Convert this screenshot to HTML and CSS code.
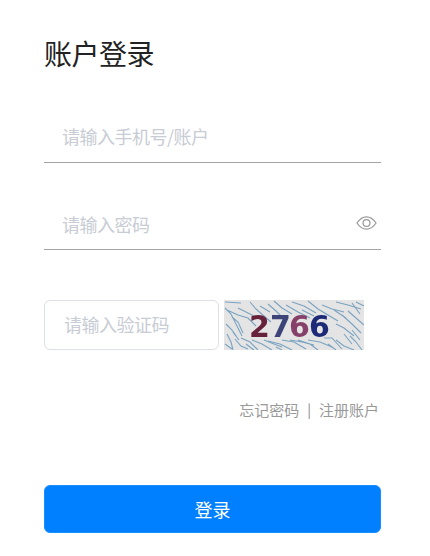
FILE: index.html
```html
<!DOCTYPE html>
<html lang="zh-CN">
<head>
<meta charset="utf-8">
<title>账户登录</title>
<link rel="stylesheet" href="styles.css">
</head>
<body>
<main class="login">
  <h1 class="title">账户登录</h1>
  <div class="field field-account">
    <input class="line-input" type="text" placeholder="请输入手机号/账户">
  </div>
  <div class="field field-password">
    <input class="line-input" type="password" placeholder="请输入密码">
    <svg class="eye" viewBox="0 0 22 16" width="21" height="16" aria-hidden="true">
      <path d="M1 8C4 3.600 7.300 1.500 11 1.500S18 3.600 21 8C18 12.400 14.700 14.500 11 14.500S4 12.400 1 8Z" fill="none" stroke="#999" stroke-width="1.300"/>
      <circle cx="11" cy="8" r="3.600" fill="none" stroke="#999" stroke-width="1.300"/>
    </svg>
  </div>
  <div class="captcha-row">
    <input class="captcha-input" type="text" placeholder="请输入验证码">
    <svg class="captcha" viewBox="0 0 140 50" width="140" height="50" aria-label="2766">
      <defs>
        <filter id="soft" x="-5%" y="-5%" width="110%" height="110%"><feGaussianBlur stdDeviation="0.35"/></filter>
      </defs>
      <rect width="140" height="50" fill="#e4e4e4"/>
      <g class="noise" filter="url(#soft)">
        <path d="M1 2L17 3M1 8L7 14L13 26L18 36M3 10L14 15L24 18L32 26M8 17L14 22L19 33M2 24L8 30L12 36M14 8L26 14L36 19"/>
        <path d="M26 2L32 9L40 16L47 22M44 4L52 11L60 19M50 1L58 8L68 14M62 5L74 12L86 18M36 6L46 12"/>
        <path d="M68 2L80 6L92 13M84 1L94 9L104 15L114 21M98 5L108 9L120 12M112 2L124 5L137 9M78 10L90 16"/>
        <path d="M118 15L128 24L137 33M112 24L120 28L130 36M124 11L132 18L140 25M128 30L136 40M128 3L136 14M132 2L140 6M110 10L122 18"/>
        <path d="M3 34L7 42L9 50M11 39L17 46L24 49M1 44L8 49M17 38L26 42L34 50M28 40L38 44L48 50M40 40L50 44L58 47M9 32L15 40"/>
        <path d="M44 41L56 44L68 50M58 40L70 42L82 49M66 40L78 42L90 45M84 40L96 42L108 47M100 38L108 38L118 49M74 40L86 44L94 50"/>
        <path d="M112 40L120 46L130 50M126 36L132 42L138 50M104 44L112 50M120 34L128 44M22 44L30 50M52 47L58 50"/>
      </g>
      <g class="digits" filter="url(#soft)">
        <text x="25" y="37" fill="#66223a">2</text>
        <text x="46" y="37" fill="#3d4478">7</text>
        <text x="65" y="37" fill="#86406a">6</text>
        <text x="85" y="37" fill="#1e2a78">6</text>
      </g>
    </svg>
  </div>
  <nav class="links">
    <a class="link">忘记密码</a>
    <span class="sep">|</span>
    <a class="link">注册账户</a>
  </nav>
  <button class="submit" type="button">登录</button>
</main>
</body>
</html>
```
FILE: styles.css
```css
* { box-sizing: border-box; }
html, body { margin: 0; height: 100%; background: #fff; }
body {
  font-family: "Noto Sans CJK SC", "Liberation Sans", sans-serif;
  overflow: hidden;
}
.login {
  display: flex;
  flex-direction: column;
  width: 337px;
  margin-left: 44px;
  padding-top: 33px;
}
.title {
  margin: 0;
  height: 40px;
  font-size: 28px;
  line-height: 40px;
  font-weight: 400;
  letter-spacing: -0.5px;
  color: #222;
}
.field {
  display: flex;
  align-items: center;
  height: 50px;
  border-bottom: 1px solid #a3a3a3;
}
.field-account { margin-top: 40px; }
.field-password { margin-top: 37px; padding-right: 4px; }
.line-input, .captcha-input {
  flex: 1;
  min-width: 0;
  border: 0;
  outline: 0;
  background: transparent;
  font-family: inherit;
  font-size: 18px;
  letter-spacing: -0.5px;
  color: #333;
}
.line-input { height: 100%; padding: 0 0 4px 18px; }
.field-password .line-input { padding-bottom: 2px; }
.line-input::placeholder, .captcha-input::placeholder { color: #c8ccd4; opacity: 1; }
.eye { flex: none; margin-bottom: 3px; }
.captcha-row {
  display: flex;
  gap: 5px;
  height: 50px;
  margin-top: 50px;
}
.captcha-input {
  flex: none;
  width: 175px;
  height: 50px;
  padding: 0 19px 3px;
  border: 1px solid #dcdfe6;
  border-radius: 6px;
}
.captcha { flex: none; display: block; }
.noise { fill: none; stroke: #7aa3c2; stroke-width: 1.100; }
.digits {
  font-family: "DejaVu Sans", sans-serif;
  font-size: 30px;
  font-weight: 700;
}
.links {
  display: flex;
  justify-content: flex-end;
  align-items: center;
  gap: 8px;
  height: 22px;
  margin-top: 48px;
  padding-right: 2px;
  font-size: 15px;
  color: #999;
}
.sep { color: #888; font-size: 14px; }
.submit {
  height: 48px;
  margin-top: 65px;
  border: 1px solid #1a8dff;
  border-radius: 6px;
  background: #0080ff;
  color: #fff;
  font-family: inherit;
  font-size: 18px;
}
```
